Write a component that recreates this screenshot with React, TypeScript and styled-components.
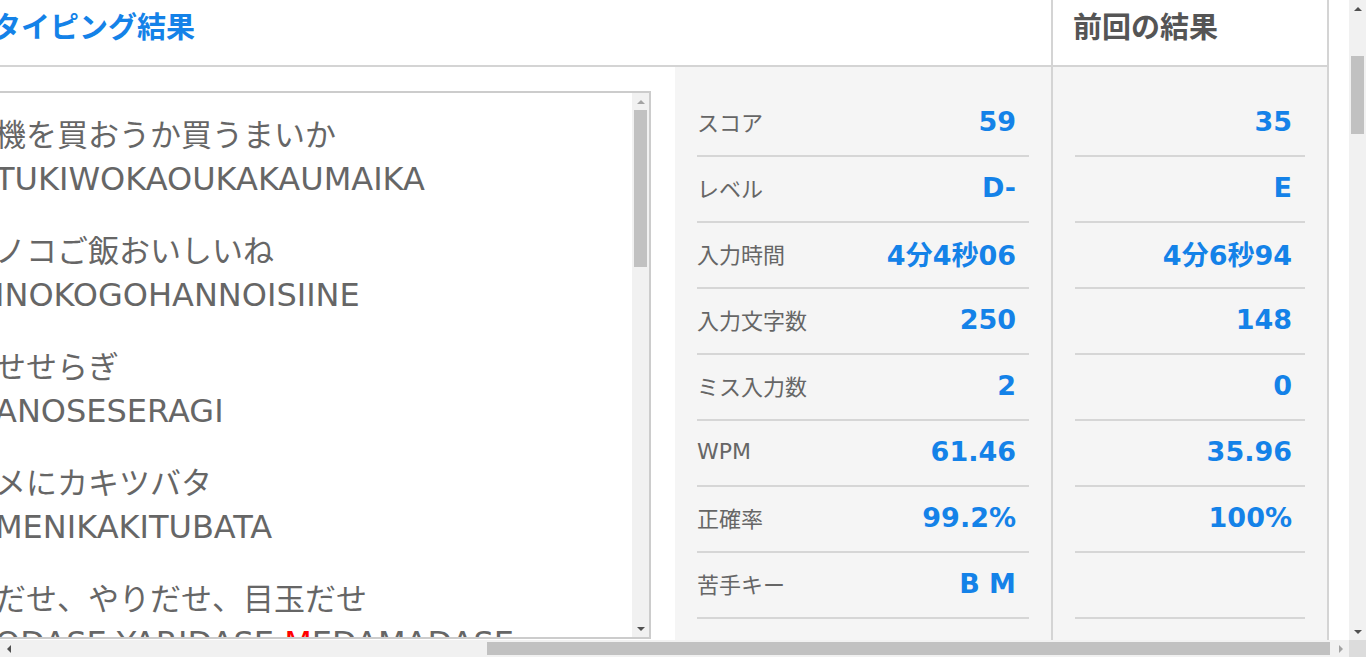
import React from 'react';
import styled, { createGlobalStyle } from 'styled-components';

const GlobalStyle = createGlobalStyle`
  *, *::before, *::after { box-sizing: border-box; }
  html, body { margin: 0; padding: 0; overflow: hidden; background: #fff; }
  body { font-family: "DejaVu Sans", "Noto Sans CJK JP", sans-serif; }
`;

const BLUE = '#1482e8';
const LINE = '#d4d4d4';

const Viewport = styled.div`
  display: grid;
  grid-template-columns: 1fr 17px;
  grid-template-rows: 1fr 17px;
  width: 100vw;
  height: 100vh;
`;

const Page = styled.div`
  overflow: hidden;
  display: flex;
  justify-content: flex-end;
  align-items: flex-start;
`;

const Table = styled.div`
  flex-shrink: 0;
  width: 1356px;
  height: 720px;
  margin-right: 20px;
  display: flex;
  border-right: 2px solid ${LINE};
`;

const CurrentCol = styled.div`
  flex: 1;
  display: flex;
  flex-direction: column;
  border-right: 2px solid ${LINE};
`;

const PrevCol = styled.div`
  width: 274px;
  display: flex;
  flex-direction: column;
`;

const HeadCell = styled.div<{ $pad: number }>`
  height: 67px;
  padding-left: ${(p) => p.$pad}px;
  border-bottom: 2px solid ${LINE};
`;

const Title = styled.h2<{ $color: string }>`
  margin: 7px 0 0;
  font-family: "Noto Sans CJK JP", sans-serif;
  font-size: 29px;
  font-weight: 700;
  line-height: 36px;
  color: ${(p) => p.$color};
  white-space: nowrap;
`;

const CurrentBody = styled.div`
  flex: 1;
  display: flex;
  align-items: flex-start;
`;

const TextBox = styled.div`
  flex: 1;
  height: 548px;
  margin: 24px 24px 0 0;
  border: 2px solid #cccccc;
  display: flex;
  overflow: hidden;
`;

const Lines = styled.div`
  flex: 1;
  padding: 17px 0 0 20px;
  overflow: hidden;
  color: #666;
`;

const Pair = styled.div`
  margin-bottom: 24px;
`;

const KanaLine = styled.div`
  font-family: "Noto Sans CJK JP", sans-serif;
  font-size: 31px;
  line-height: 46px;
  white-space: nowrap;
`;

const RomajiLine = styled.div`
  font-family: "DejaVu Sans", sans-serif;
  font-size: 32px;
  line-height: 46px;
  white-space: nowrap;
`;

const Miss = styled.span`
  color: #ff0000;
`;

const StatPanel = styled.div<{ $width?: number }>`
  ${(p) => (p.$width ? `width: ${p.$width}px;` : 'flex: 1;')}
  align-self: stretch;
  background: #f5f5f5;
  padding: 24px 22px 0;
`;

const StatRow = styled.div`
  height: 66px;
  display: flex;
  align-items: center;
  padding: 0 13px 4px 0;
  border-bottom: 2px solid #d6d6d6;
`;

const Label = styled.span`
  font-size: 22px;
  color: #666;
  font-family: "DejaVu Sans", "Noto Sans CJK JP", sans-serif;
`;

const Value = styled.span`
  margin-left: auto;
  font-family: "DejaVu Sans", "Noto Sans CJK JP", sans-serif;
  font-size: 27px;
  font-weight: 700;
  color: ${BLUE};
  white-space: pre;
`;

/* scrollbars */
const Track = styled.div<{ $dir: 'v' | 'h' }>`
  display: flex;
  flex-direction: ${(p) => (p.$dir === 'v' ? 'column' : 'row')};
  background: #f1f1f1;
`;

const Btn = styled.div`
  flex: 0 0 17px;
  display: flex;
  align-items: center;
  justify-content: center;
`;

const Arrow = styled.span<{ $to: 'up' | 'down' | 'left' | 'right'; $on: boolean }>`
  width: 0;
  height: 0;
  ${({ $to, $on }) => {
    const c = $on ? '#505050' : '#a3a3a3';
    if ($to === 'up') return `border-left: 4px solid transparent; border-right: 4px solid transparent; border-bottom: 4px solid ${c};`;
    if ($to === 'down') return `border-left: 4px solid transparent; border-right: 4px solid transparent; border-top: 4px solid ${c};`;
    if ($to === 'left') return `border-top: 4px solid transparent; border-bottom: 4px solid transparent; border-right: 4px solid ${c};`;
    return `border-top: 4px solid transparent; border-bottom: 4px solid transparent; border-left: 4px solid ${c};`;
  }}
`;

const VThumb = styled.div<{ $top: number; $size: number }>`
  margin: ${(p) => p.$top}px 2px 0;
  height: ${(p) => p.$size}px;
  background: #c1c1c1;
`;

const HThumb = styled.div<{ $size: number }>`
  margin: 2px 2px 2px 0;
  width: ${(p) => p.$size}px;
  background: #c1c1c1;
`;

const Fill = styled.div`
  flex: 1;
`;

const Corner = styled.div`
  background: #dcdcdc;
`;

const BoxBar = styled(Track)`
  width: 17px;
`;

const typed = [
  { kana: '機を買おうか買うまいか', romaji: 'TUKIWOKAOUKAKAUMAIKA' },
  { kana: 'ノコご飯おいしいね', romaji: 'INOKOGOHANNOISIINE' },
  { kana: 'せせらぎ', romaji: 'ANOSESERAGI' },
  { kana: 'メにカキツバタ', romaji: 'MENIKAKITUBATA' },
  { kana: 'だせ、やりだせ、目玉だせ', romaji: 'ODASE,YARIDASE,MEDAMADASE', miss: 15 },
];

const stats = [
  { label: 'スコア', now: '59', prev: '35' },
  { label: 'レベル', now: 'D-', prev: 'E' },
  { label: '入力時間', now: '4分4秒06', prev: '4分6秒94' },
  { label: '入力文字数', now: '250', prev: '148' },
  { label: 'ミス入力数', now: '2', prev: '0' },
  { label: 'WPM', now: '61.46', prev: '35.96' },
  { label: '正確率', now: '99.2%', prev: '100%' },
  { label: '苦手キー', now: 'B M', prev: '' },
];

const renderRomaji = (text: string, miss?: number) => {
  if (miss === undefined) return text;
  return (
    <>
      {text.slice(0, miss)}
      <Miss>{text[miss]}</Miss>
      {text.slice(miss + 1)}
    </>
  );
};

const App: React.FC = () => {
  return (
    <Viewport>
      <GlobalStyle />
      <Page>
        <Table>
          <CurrentCol>
            <HeadCell $pad={19}>
              <Title $color={BLUE}>タイピング結果</Title>
            </HeadCell>
            <CurrentBody>
              <TextBox>
                <Lines>
                  {typed.map((t) => (
                    <Pair key={t.romaji}>
                      <KanaLine>{t.kana}</KanaLine>
                      <RomajiLine>{renderRomaji(t.romaji, t.miss)}</RomajiLine>
                    </Pair>
                  ))}
                </Lines>
                <BoxBar $dir="v">
                  <Btn>
                    <Arrow $to="up" $on={false} />
                  </Btn>
                  <VThumb $top={0} $size={157} />
                  <Fill />
                  <Btn>
                    <Arrow $to="down" $on />
                  </Btn>
                </BoxBar>
              </TextBox>
              <StatPanel $width={376}>
                {stats.map((s) => (
                  <StatRow key={s.label}>
                    <Label>{s.label}</Label>
                    <Value>{s.now}</Value>
                  </StatRow>
                ))}
              </StatPanel>
            </CurrentBody>
          </CurrentCol>
          <PrevCol>
            <HeadCell $pad={20}>
              <Title $color="#555">前回の結果</Title>
            </HeadCell>
            <StatPanel>
              {stats.map((s) => (
                <StatRow key={s.label}>
                  <Value>{s.prev}</Value>
                </StatRow>
              ))}
            </StatPanel>
          </PrevCol>
        </Table>
      </Page>
      <Track $dir="v">
        <Btn>
          <Arrow $to="up" $on />
        </Btn>
        <VThumb $top={39} $size={78} />
        <Fill />
        <Btn>
          <Arrow $to="down" $on />
        </Btn>
      </Track>
      <Track $dir="h">
        <Btn>
          <Arrow $to="left" $on />
        </Btn>
        <Fill />
        <HThumb $size={843} />
        <Btn>
          <Arrow $to="right" $on={false} />
        </Btn>
      </Track>
      <Corner />
    </Viewport>
  );
};

export default App;
